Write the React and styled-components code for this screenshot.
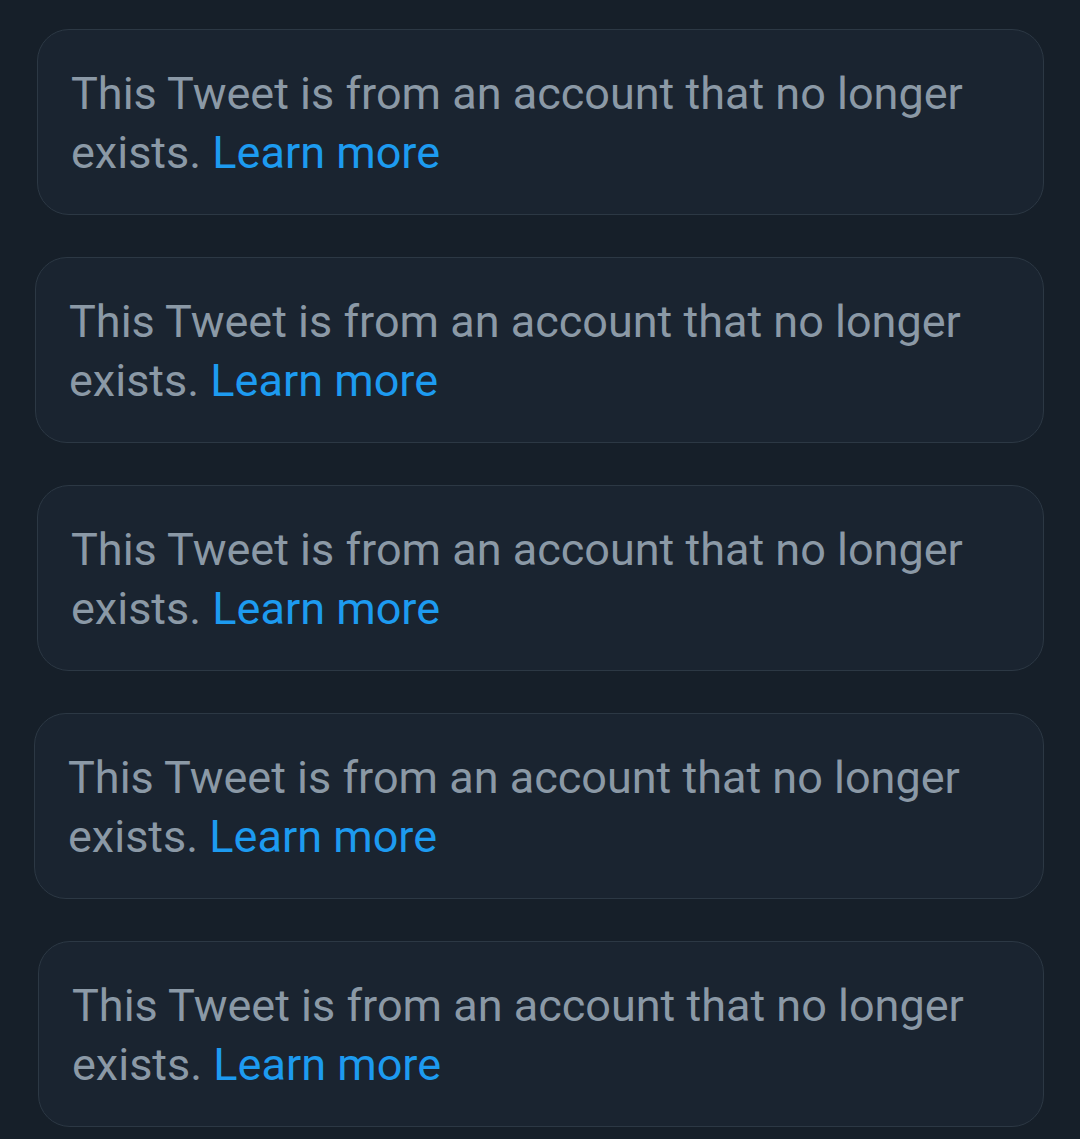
import styled, { createGlobalStyle } from 'styled-components'

const GlobalStyle = createGlobalStyle`
    html, body {
        margin: 0;
        padding: 0;
        background-color: #161f29;
    }
    body {
        font-family: Roboto, "Noto Sans", "Liberation Sans", sans-serif;
    }
`;

const Timeline = styled.div`
    min-height: 1139px;
    box-sizing: border-box;
    padding: 29px 36px 0 0;
    display: flex;
    flex-direction: column;
    gap: 42px;
    background-color: #161f29;
`;

const Notice = styled.div`
    margin-left: ${(props) => props.shift}px;
    box-sizing: border-box;
    height: 186px;
    padding: 34px 33px 32px 33px;
    border: 1px solid #2c3844;
    border-radius: 32px;
    background-color: #1a2430;
`;

const NoticeText = styled.p`
    margin: 0;
    font-size: 45px;
    line-height: 59px;
    color: #8b99a6;
`;

const LearnMore = styled.a`
    color: #1d9bf0;
    text-decoration: none;
    cursor: pointer;
`;

// each screenshot in the stack was cropped a hair differently
const shifts = [37, 35, 37, 34, 38];

const App = () => {
    return (
        <>
            <GlobalStyle />
            <Timeline>
                {shifts.map((shift, i) => (
                    <Notice key={i} shift={shift}>
                        <NoticeText>
                            This Tweet is from an account that no longer exists.{' '}
                            <LearnMore>Learn more</LearnMore>
                        </NoticeText>
                    </Notice>
                ))}
            </Timeline>
        </>
    )
}

export default App
